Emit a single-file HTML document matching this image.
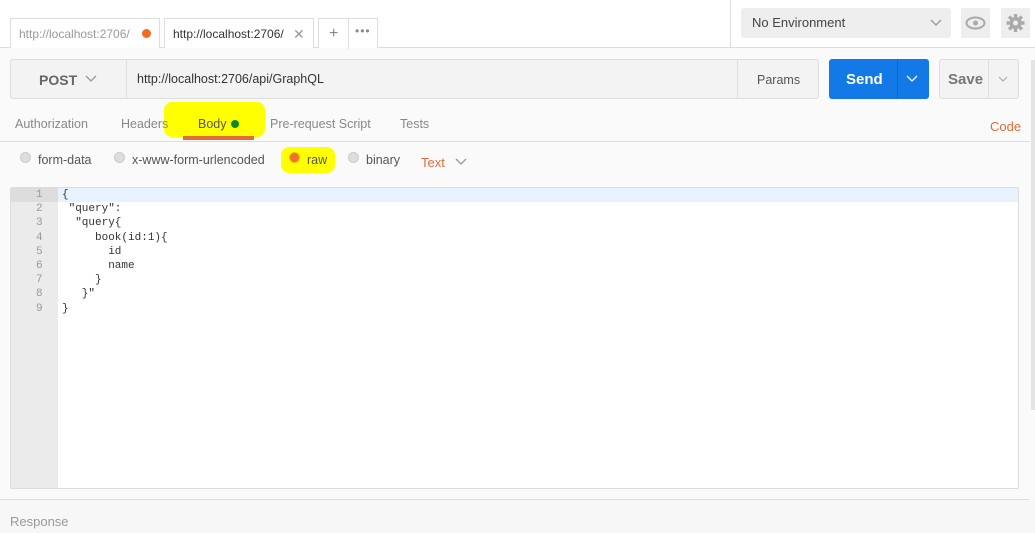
<!DOCTYPE html>
<html><head><style>
*{box-sizing:border-box;margin:0;padding:0}
body{width:1035px;height:533px;overflow:hidden;background:#fafafa;font-family:"Liberation Sans",sans-serif;position:relative;color:#333}
.a{position:absolute}
.top{left:0;top:0;width:1035px;height:48px;background:#fff;border-bottom:1px solid #ddd}
.tab{top:18px;height:30px;border:1px solid #ddd;border-bottom:none;background:#fff;font-size:12px;line-height:30px;padding-left:8px}
.in{border:1px solid #ddd;background:#f3f3f3;border-radius:3px}
.t{font-size:12.5px;color:#888}
.mono{font-family:"Liberation Mono","DejaVu Sans Mono",monospace;font-size:11px;line-height:14.2px;white-space:pre;color:#333}
.hl{background:#ffff00;border-radius:8px}
.radio{width:11px;height:11px;border-radius:50%;background:#ddd;border:1px solid #ccc}
</style></head><body>
<div class="a top"></div>
<div class="a" style="left:730px;top:0;width:1px;height:48px;background:#ddd"></div>
<div class="a tab" style="left:10px;width:150px;color:#999">http://localhost:2706/<span class="a" style="left:131px;top:10px;width:9px;height:9px;border-radius:50%;background:#f26b21"></span></div>
<div class="a tab" style="left:164px;width:150px;color:#333">http://localhost:2706/<span class="a" style="left:128px;top:0;color:#999;font-size:14px">✕</span></div>
<div class="a tab" style="left:318px;width:60px;padding:0"><span class="a" style="left:10px;color:#888;font-size:16px">+</span><span class="a" style="left:29px;top:0;width:1px;height:30px;background:#ddd"></span><span class="a" style="left:36px;top:-3px;color:#888;font-size:12px;letter-spacing:1px">•••</span></div>
<div class="a in" style="left:741px;top:8px;width:210px;height:30px;border:none;background:#eee;font-size:13px;line-height:30px;padding-left:11px;color:#444">No Environment<svg class="a" style="left:189px;top:11px" width="12" height="8"><path d="M1 1l5 5 5-5" fill="none" stroke="#999" stroke-width="1.3"/></svg></div>
<div class="a" style="left:961px;top:8px;width:29px;height:30px;background:#eee"><svg width="29" height="30"><ellipse cx="14.5" cy="15" rx="9" ry="5.5" fill="none" stroke="#aaa" stroke-width="2"/><circle cx="14.5" cy="15" r="2.5" fill="#aaa"/></svg></div>
<div class="a" style="left:1001px;top:8px;width:29px;height:30px;background:#eee"><svg width="29" height="30"><g transform="translate(14.5 15)" fill="#aaa"><circle r="6"/><g stroke="#aaa" stroke-width="3.4"><path d="M0-9V9M-9 0H9M-6.4-6.4L6.4 6.4M-6.4 6.4L6.4-6.4"/></g><circle r="2.5" fill="#eee"/></g></svg></div>
<div class="a" style="left:1031px;top:60px;width:4px;height:350px;background:#e4e4e4"></div>

<div class="a in" style="left:10px;top:59px;width:809px;height:40px"></div>
<div class="a" style="left:126px;top:60px;width:1px;height:38px;background:#ddd"></div>
<div class="a" style="left:737px;top:60px;width:1px;height:38px;background:#ddd"></div>
<div class="a" style="left:39px;top:72px;font-size:14px;font-weight:bold;color:#666">POST</div>
<svg class="a" style="left:85px;top:75px" width="12" height="8"><path d="M1 1l5 5 5-5" fill="none" stroke="#999" stroke-width="1.3"/></svg>
<div class="a" style="left:137px;top:72px;font-size:12.5px;color:#333">http://localhost:2706/api/GraphQL</div>
<div class="a" style="left:757px;top:73px;font-size:12.5px;color:#555">Params</div>
<div class="a" style="left:829px;top:59px;width:100px;height:40px;background:#1279e6;border-radius:3px"></div>
<div class="a" style="left:897px;top:59px;width:1px;height:40px;background:#0e68c8"></div>
<div class="a" style="left:846px;top:71px;font-size:15px;font-weight:bold;color:#fff">Send</div>
<svg class="a" style="left:906px;top:75px" width="12" height="8"><path d="M1 1l5 5 5-5" fill="none" stroke="#fff" stroke-width="1.3"/></svg>
<div class="a in" style="left:939px;top:59px;width:80px;height:40px"></div>
<div class="a" style="left:988px;top:60px;width:1px;height:38px;background:#ddd"></div>
<div class="a" style="left:948px;top:71px;font-size:15px;font-weight:bold;color:#777">Save</div>
<svg class="a" style="left:998px;top:76px" width="10" height="7"><path d="M1 1l4 4 4-4" fill="none" stroke="#aaa" stroke-width="1.2"/></svg>

<div class="a" style="left:0;top:141px;width:1030px;height:1px;background:#ddd"></div>
<div class="a hl" style="left:164px;top:102px;width:101px;height:35px"></div>
<div class="a t" style="left:15px;top:117px">Authorization</div>
<div class="a t" style="left:121px;top:117px">Headers</div>
<div class="a" style="left:198px;top:117px;font-size:12.5px;color:#555">Body</div>
<div class="a" style="left:231px;top:120px;width:8px;height:8px;border-radius:50%;background:#0a8a2a"></div>
<div class="a" style="left:183px;top:136px;width:71px;height:4px;background:#e06d3a"></div>
<div class="a t" style="left:270px;top:117px">Pre-request Script</div>
<div class="a t" style="left:400px;top:117px">Tests</div>
<div class="a" style="left:990px;top:119px;font-size:13px;color:#e06d3a">Code</div>

<div class="a hl" style="left:281px;top:147px;width:54px;height:26px"></div>
<div class="a radio" style="left:20px;top:152px"></div>
<div class="a t" style="left:38px;top:153px;color:#555">form-data</div>
<div class="a radio" style="left:114px;top:152px"></div>
<div class="a t" style="left:132px;top:153px;color:#555">x-www-form-urlencoded</div>
<div class="a radio" style="left:289px;top:152px;background:#f07030;border-color:#e8c000"></div>
<div class="a t" style="left:307px;top:153px;color:#555">raw</div>
<div class="a radio" style="left:348px;top:152px"></div>
<div class="a t" style="left:366px;top:153px;color:#555">binary</div>
<div class="a" style="left:421px;top:155px;font-size:13px;color:#e06d3a">Text</div>
<svg class="a" style="left:455px;top:158px" width="12" height="8"><path d="M1 1l5 5 5-5" fill="none" stroke="#999" stroke-width="1.3"/></svg>

<div class="a" style="left:10px;top:187px;width:1009px;height:302px;background:#fff;border:1px solid #ddd;border-radius:2px"></div>
<div class="a" style="left:11px;top:188px;width:47px;height:300px;background:#ebebeb"></div>
<div class="a" style="left:58px;top:188px;width:960px;height:14px;background:#e8f2ff"></div>
<div class="a" style="left:11px;top:188px;width:47px;height:14px;background:#ddd"></div>
<div class="a mono" style="left:36px;top:188px;color:#999">1
2
3
4
5
6
7
8
9</div>
<div class="a mono" style="left:62px;top:188px">{
 "query":
  "query{
     book(id:1){
       id
       name
     }
   }"
}</div>

<div class="a" style="left:0;top:499px;width:1030px;height:1px;background:#ddd"></div>
<div class="a" style="left:0;top:500px;width:1035px;height:33px;background:#f7f7f7"></div>
<div class="a" style="left:10px;top:514px;font-size:13px;color:#999">Response</div>
</body></html>
